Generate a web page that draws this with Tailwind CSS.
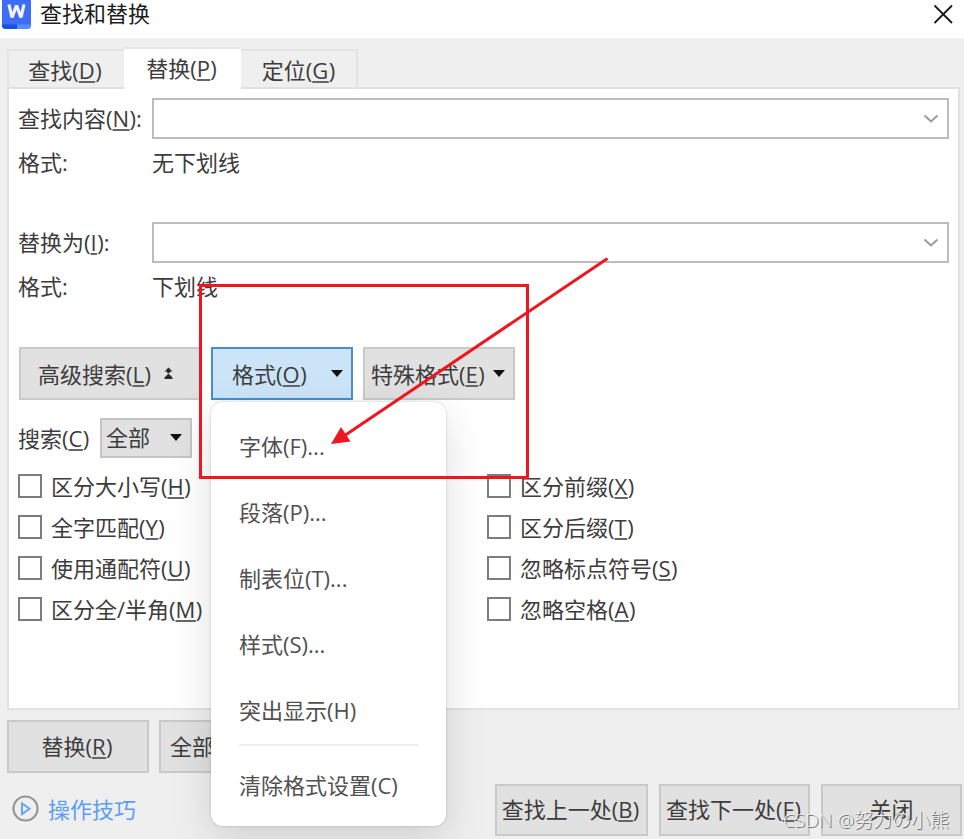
<!DOCTYPE html>
<html lang="zh-CN">
<head>
<meta charset="utf-8">
<title>查找和替换</title>
<script src="https://cdn.jsdelivr.net/npm/@tailwindcss/browser@4"></script>
</head>
<body class="bg-[#efefef]">
<div class="relative w-[964px] h-[839px] overflow-hidden bg-[#efefef] font-['Open_Sans','Noto_Sans_CJK_SC',sans-serif] text-[22px] leading-[30px] text-[#3c3c3c] whitespace-nowrap [&_u]:decoration-[1.5px] [&_u]:decoration-[#666] [&_u]:underline-offset-[2px] [&_u]:tracking-[0.5px]">
  <!-- Title bar -->
  <header class="h-[38px] bg-white flex items-start justify-between pl-[2px] pr-[10px] text-[#1c1c1c]">
    <div class="flex">
      <svg class="w-[29px] h-[29px]" viewBox="0 0 29 29"><path d="M0 0h29v25q0 4-4 4H4q-4 0-4-4z" fill="#3f6cf6"/><path d="M0 24.500h15V29H4q-4 0-4-4z" fill="#1652dc"/><path d="M15 24.500h14q0 4.500-4 4.500H15z" fill="#5b8cff"/><path d="M7 4.500l3 13 4.500-12 4.500 12 3-13" fill="none" stroke="#f1f4ff" stroke-width="3.200" stroke-linejoin="bevel"/></svg>
      <h1 class="ml-[9px] leading-[26px]">查找和替换</h1>
    </div>
    <svg class="w-[22px] h-[28px]" viewBox="0 0 22 28" fill="none" stroke="#1a1a1a" stroke-width="1.800"><path d="M2.500 5.500l17.500 17.500M20 5.500L2.500 23"/></svg>
  </header>

  <!-- Tabs -->
  <nav class="flex items-end h-[51px] pl-[7px] text-center">
    <div class="w-[117px] h-[40px] border-2 border-r-0 border-b-0 border-[#e3e3e3] pt-[4px] pr-[3px]">查找(<u>D</u>)</div>
    <div class="w-[117px] h-[42px] bg-white border-t-2 border-[#e8e8e8] pt-[4px] pr-[2px]">替换(<u>P</u>)</div>
    <div class="w-[117px] h-[40px] border-2 border-l-0 border-b-0 border-[#e3e3e3] pt-[4px]">定位(<u>G</u>)</div>
  </nav>

  <!-- Panel -->
  <main class="ml-[7px] -mt-[2px] w-[953px] h-[623px] border-2 border-[#e1e1e1] bg-white px-[9px] pt-[9px]">
    <div class="flex items-center h-[41px]">
      <label class="w-[134px] pb-px">查找内容(<u>N</u>):</label>
      <div class="w-[797px] h-[41px] border-2 border-[#bcbcbc] flex items-center justify-end pr-[8px]">
        <svg class="w-[16px] h-[10px]" viewBox="0 0 16 10" fill="none" stroke="#9b9b9b" stroke-width="2"><path d="M1.500 1.500L8 7.500l6.500-6"/></svg>
      </div>
    </div>
    <div class="flex mt-[8px] h-[30px]"><span class="w-[134px]">格式:</span><span>无下划线</span></div>
    <div class="flex items-center h-[41px] mt-[45px]">
      <label class="w-[134px] pb-px">替换为(<u>I</u>):</label>
      <div class="w-[797px] h-[41px] border-2 border-[#bcbcbc] flex items-center justify-end pr-[8px]">
        <svg class="w-[16px] h-[10px]" viewBox="0 0 16 10" fill="none" stroke="#9b9b9b" stroke-width="2"><path d="M1.500 1.500L8 7.500l6.500-6"/></svg>
      </div>
    </div>
    <div class="flex mt-[8px] h-[30px]"><span class="w-[134px]">格式:</span><span>下划线</span></div>

    <div class="flex mt-[46px] ml-[1px] h-[53px]">
      <button class="w-[182px] h-full bg-[#e1e1e1] border-2 border-[#c9c9c9] flex items-center pl-[17px]"><span>高级搜索(<u>L</u>)</span>
        <svg class="ml-[13px] w-[9px] h-[14px]" viewBox="0 0 9 14" fill="#2a2a2a"><path d="M4.500 0.500L8.500 4.500H6v1.500H3V4.500H0.500zM4.500 6.500L8.500 10.500V12H0.500v-1.500z"/></svg>
      </button>
      <button class="ml-[10px] w-[142px] h-full bg-[#cce4f8] border-2 border-[#4b8fc6] flex items-center justify-between pl-[19px] pr-[8px]"><span>格式(<u>O</u>)</span>
        <svg class="w-[12px] h-[7px]" viewBox="0 0 12 7"><path d="M0 0h12L6 7z" fill="#111"/></svg>
      </button>
      <button class="ml-[10px] w-[152px] h-full bg-[#e1e1e1] border-2 border-[#c9c9c9] flex items-center justify-between pl-[6px] pr-[8px]"><span>特殊格式(<u>E</u>)</span>
        <svg class="w-[12px] h-[7px]" viewBox="0 0 12 7"><path d="M0 0h12L6 7z" fill="#111"/></svg>
      </button>
    </div>

    <div class="flex items-center mt-[17px] h-[41px]">
      <label class="w-[82px]">搜索(<u>C</u>)</label>
      <div class="w-[92px] h-[40px] bg-[#e1e1e1] border-2 border-[#c4c4c4] flex items-center justify-between pl-[4px] pr-[8px]"><span class="pb-px">全部</span>
        <svg class="w-[12px] h-[7px]" viewBox="0 0 12 7"><path d="M0 0h12L6 7z" fill="#111"/></svg>
      </div>
    </div>

    <div class="grid grid-cols-[469px_1fr] auto-rows-[41px] mt-[7px] items-center [&_i]:block [&_i]:w-[24px] [&_i]:h-[24px] [&_i]:border-2 [&_i]:border-[#7d7d7d] [&_i]:mr-[9px]">
      <label class="flex items-center"><i></i><span>区分大小写(<u>H</u>)</span></label>
      <label class="flex items-center"><i></i><span>区分前缀(<u>X</u>)</span></label>
      <label class="flex items-center"><i></i><span>全字匹配(<u>Y</u>)</span></label>
      <label class="flex items-center"><i></i><span>区分后缀(<u>T</u>)</span></label>
      <label class="flex items-center"><i></i><span>使用通配符(<u>U</u>)</span></label>
      <label class="flex items-center"><i></i><span>忽略标点符号(<u>S</u>)</span></label>
      <label class="flex items-center"><i></i><span>区分全/半角(<u>M</u>)</span></label>
      <label class="flex items-center"><i></i><span>忽略空格(<u>A</u>)</span></label>
    </div>
  </main>

  <!-- Footer -->
  <footer class="pl-[7px]">
    <div class="flex mt-[10px] gap-[10px] h-[53px]">
      <button class="w-[142px] bg-[#e1e1e1] border-2 border-[#c9c9c9] pb-[2px] pr-[2px]">替换(<u>R</u>)</button>
      <button class="w-[142px] bg-[#e1e1e1] border-2 border-[#c9c9c9] text-left pl-[9px] pb-[2px]">全部替换</button>
    </div>
    <div class="flex mt-[11px] h-[52px]">
      <div class="flex items-center w-[488px] pl-[5px] pb-[3px] text-[#5c9df8]">
        <svg class="w-[27px] h-[27px] mr-[9px]" viewBox="0 0 27 27" fill="none"><circle cx="13.500" cy="13.500" r="12" stroke="#969696" stroke-width="2.200"/><path d="M10 8.500v10.500l7.500-5.250z" stroke="#68a4f8" stroke-width="2"/></svg>
        <span>操作技巧</span>
      </div>
      <button class="w-[153px] bg-[#e1e1e1] border-2 border-[#c9c9c9] pb-[2px] pr-[2px]">查找上一处(<u>B</u>)</button>
      <button class="ml-[11px] w-[151px] bg-[#e1e1e1] border-2 border-[#c9c9c9] pb-[2px] pr-[2px]">查找下一处(<u>F</u>)</button>
      <button class="ml-[11px] w-[141px] bg-[#e1e1e1] border-2 border-[#c9c9c9] pb-[2px]">关闭</button>
    </div>
  </footer>

  <!-- Format menu -->
  <div class="absolute left-[211px] top-[402px] w-[235px] h-[424px] rounded-[12px] bg-white shadow-[0_14px_44px_rgba(0,0,0,0.13),0_0_3px_rgba(0,0,0,0.18)] px-[28px] pt-[11px] text-[#505050]">
    <div class="h-[66px] leading-[66px]">字体(F)...</div>
    <div class="h-[66px] leading-[66px]">段落(P)...</div>
    <div class="h-[66px] leading-[66px]">制表位(T)...</div>
    <div class="h-[66px] leading-[66px]">样式(S)...</div>
    <div class="h-[66px] leading-[66px]">突出显示(H)</div>
    <div class="h-[2px] bg-[#eeeeee] mt-px"></div>
    <div class="h-[66px] leading-[66px] mt-[6px]">清除格式设置(C)</div>
  </div>

  <!-- Annotation -->
  <div class="absolute left-[199px] top-[284px] w-[330px] h-[195px] border-3 border-[#ee1620]"></div>
  <svg class="absolute left-[320px] top-[250px] w-[300px] h-[210px]" viewBox="320 250 300 210"><path d="M607.500 258.500L344 436" stroke="#ee1620" stroke-width="3"/><path d="M331 444l10-17 9.500 14.500z" fill="#ee1620"/></svg>

  <!-- Watermark -->
  <div class="absolute left-[783px] top-[806px] text-[19px] leading-[28px] font-light text-[#f0f0f0] [text-shadow:1px_1px_0_#666]">CSDN @努力の小熊</div>
</div>
</body>
</html>
